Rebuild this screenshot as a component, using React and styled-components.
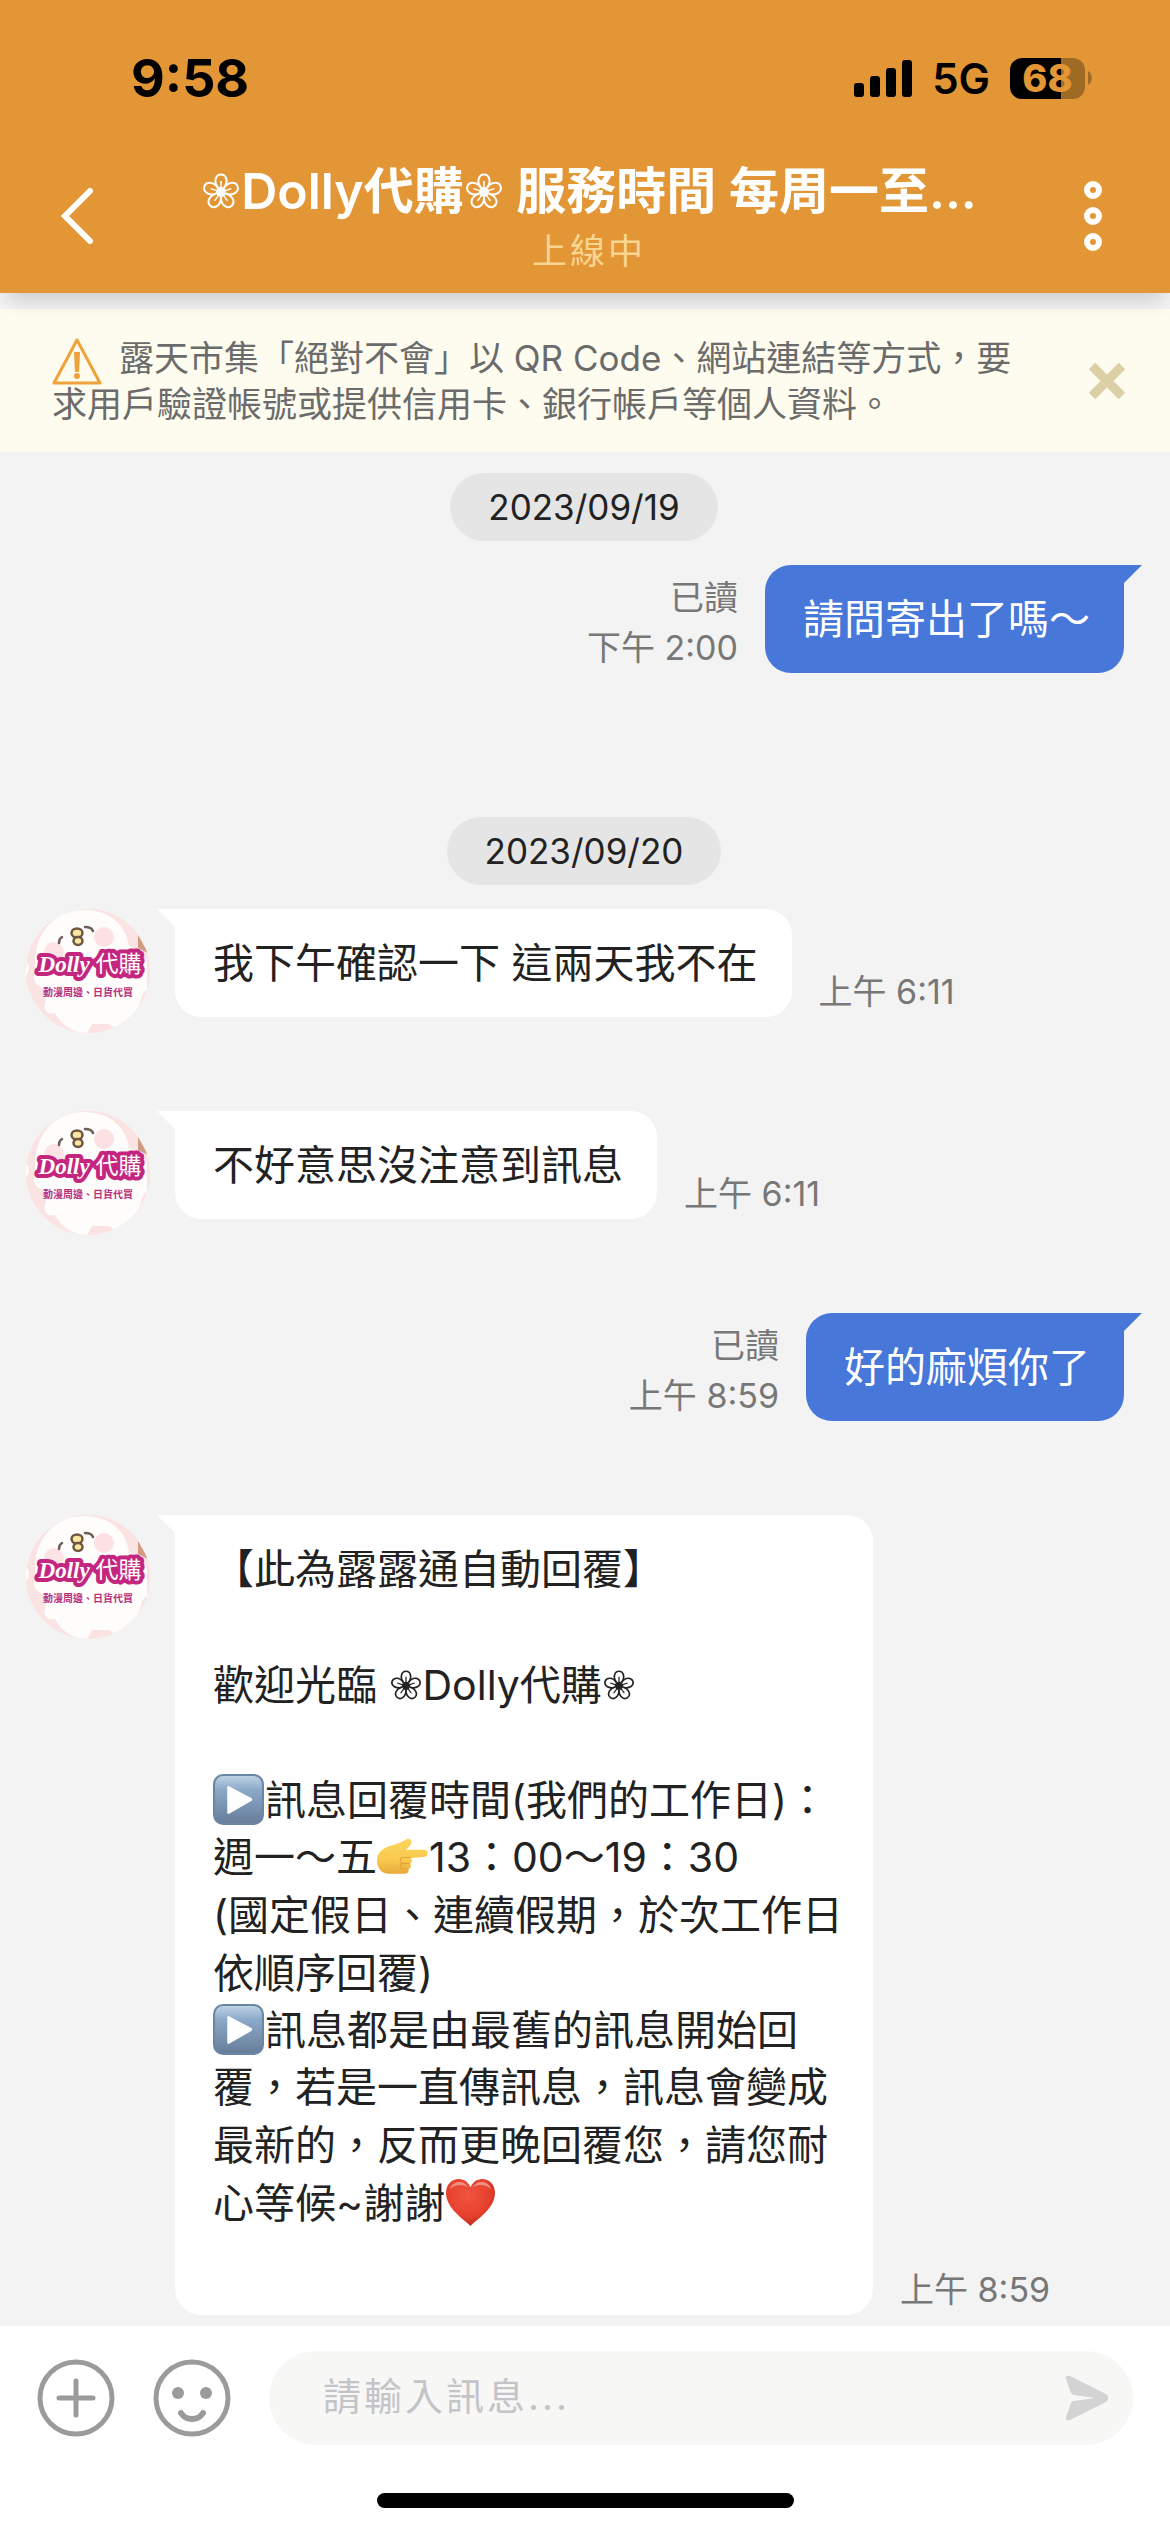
import * as React from "react"
import styled, { createGlobalStyle } from "styled-components"

const contact = {
  name: "{flower}Dolly代購{flower} 服務時間 每周一至...",
  status: "上線中",
}

const days = [
  {
    date: "2023/09/19",
    messages: [
      { id: 1, mine: true, time: "下午 2:00", lines: ["請問寄出了嗎～"] },
    ],
  },
  {
    date: "2023/09/20",
    messages: [
      { id: 2, time: "上午 6:11", lines: ["我下午確認一下 這兩天我不在"] },
      { id: 3, time: "上午 6:11", lines: ["不好意思沒注意到訊息"] },
      { id: 4, mine: true, time: "上午 8:59", lines: ["好的麻煩你了"] },
      {
        id: 5,
        time: "上午 8:59",
        lines: [
          "【此為露露通自動回覆】",
          "",
          "歡迎光臨 {flower}Dolly代購{flower}",
          "",
          "{play}訊息回覆時間(我們的工作日)：",
          "週一～五{point}13：00～19：30",
          "(國定假日、連續假期，於次工作日",
          "依順序回覆)",
          "{play}訊息都是由最舊的訊息開始回",
          "覆，若是一直傳訊息，訊息會變成",
          "最新的，反而更晚回覆您，請您耐",
          "心等候~謝謝{heart}",
          "",
        ],
      },
    ],
  },
]

const petals = [0, 72, 144, 216, 288]

const FlowerEmoji = ({ large }) => (
  <Flower $large={large} viewBox="0 0 36 36" role="img" aria-label="❀">
    {petals.map(angle => (
      <g key={angle} transform={`rotate(${angle} 18 19)`} fill="none" stroke="currentColor">
        <path d="M15 15C10 8 13 1.500 18 1.500S26 8 21 15" strokeWidth="2" />
        <path d="M18 17V8" strokeWidth="1.500" />
      </g>
    ))}
    <circle cx="18" cy="19" r="5" fill="currentColor" />
  </Flower>
)

const PlayEmoji = () => (
  <Emoji viewBox="0 0 50 50" role="img" aria-label="▶️">
    <defs>
      <linearGradient id="play-face" x1="0" y1="0" x2="0" y2="1">
        <stop offset="0" stopColor="#c3d5e6" />
        <stop offset="0.3" stopColor="#8ba9c9" />
        <stop offset="1" stopColor="#667c98" />
      </linearGradient>
    </defs>
    <rect x="1" y="1" width="48" height="48" rx="9" fill="url(#play-face)" stroke="#6b86a2" strokeWidth="2" />
    <path d="M14 13.500c0-1.600 1-2 2.200-1.300l21.300 11.300c1.300.8 1.300 2.200 0 3L16.200 38.800c-1.200.7-2.200.3-2.200-1.300z" fill="#fff" />
  </Emoji>
)

const PointEmoji = () => (
  <Emoji viewBox="0 0 50 50" role="img" aria-label="👉">
    <defs>
      <linearGradient id="hand" x1="0" y1="0" x2="0" y2="1">
        <stop offset="0" stopColor="#fbd55c" />
        <stop offset="0.6" stopColor="#f8c94e" />
        <stop offset="1" stopColor="#e9a93a" />
      </linearGradient>
    </defs>
    <path
      d="M0 29c0-8 6-12 12-14 7-2 12-4 17-7 3-1.500 6 1 4.500 4.500-1 2.500-3.500 4.500-5.500 6h18c5 0 5 6.500 0 7l-13 1c2 2 1.500 4.500-.5 5.500 1.500 2.500.5 4.500-1.500 5 .5 3-1 5-4 5H12C4 42 0 36 0 29z"
      fill="url(#hand)"
    />
    <path d="M33 26h-8c-3 .3-3 5.300 0 5.600h7M31 32h-6c-3 .3-3 4.800 0 5h5" fill="none" stroke="#e3a238" strokeWidth="1" />
  </Emoji>
)

const HeartEmoji = () => (
  <Emoji viewBox="0 0 50 50" role="img" aria-label="❤️">
    <defs>
      <radialGradient id="heart-face" cx="0.45" cy="0.35" r="0.75">
        <stop offset="0" stopColor="#f0553f" />
        <stop offset="0.6" stopColor="#e6402e" />
        <stop offset="1" stopColor="#a82216" />
      </radialGradient>
    </defs>
    <path d="M25 48C18 41 1 31 1 15.500 1 7 7 2 13.500 2 19 2 23 5.500 25 10c2-4.500 6-8 11.500-8C43 2 49 7 49 15.500 49 31 32 41 25 48z" fill="url(#heart-face)" />
    <path d="M5 12c1-5 5-7 9-7s7 2 8 5c-4-3-12-3-17 2zM28 10c1-3 4-5 8-5s8 2 9 7c-5-5-13-5-17-2z" fill="#fff" opacity="0.4" />
  </Emoji>
)

const emojis = { flower: FlowerEmoji, play: PlayEmoji, point: PointEmoji, heart: HeartEmoji }

const RichText = ({ text, large }) =>
  text.split(/\{(\w+)\}/).map((part, i) => {
    if (i % 2 === 0) return part
    const Picture = emojis[part]
    return <Picture key={i} large={large} />
  })

const Avatar = () => (
  <AvatarPicture viewBox="0 0 124 124" role="img" aria-label="Dolly 代購">
    <defs>
      <clipPath id="avatar-clip">
        <circle cx="62" cy="62" r="62" />
      </clipPath>
    </defs>
    <g clipPath="url(#avatar-clip)">
      <rect width="124" height="124" fill="#fae3e2" />
      <path
        d="M9 54C9 22 30 1 58 1c26 0 42 15 45 36 8 2 12 10 18 14v30c-8 4-4 14-12 22-4 6-12 14-20 16l-6-4H66l-5 9c-14 0-26-8-32-20-8 2-12-4-10-10 2-6 0-12-4-16C4 74 9 62 9 54z"
        fill="#fffdfc"
      />
      <path d="M0 52c4 4 4 10 0 14z" fill="#fffdfc" />
      <circle cx="78" cy="28" r="10" fill="#fbe1e1" />
      <circle cx="28" cy="43" r="10" fill="#fbe4e3" />
      <path d="M112 26l10 18-10-5z" fill="#cf9b82" />
      <path d="M33 34c0-3 1-5 3-6M59 18c4 0 7 1 8 4" fill="none" stroke="#6f5d59" strokeWidth="2.500" strokeLinecap="round" />
      <ellipse cx="51" cy="24" rx="5.500" ry="4.500" fill="#f8e7a0" stroke="#6f5640" strokeWidth="2.500" />
      <ellipse cx="52" cy="32" rx="4.500" ry="4" fill="#f8e7a0" stroke="#6f5640" strokeWidth="2.500" />
      <LogoText x="64" y="63" fontSize="23" $outlined>
        Dolly <tspan fontStyle="normal" fontWeight="400">代購</tspan>
      </LogoText>
      <LogoText x="62" y="87" fontSize="10">
        動漫周邊、日貨代買
      </LogoText>
    </g>
  </AvatarPicture>
)

const Message = ({ mine, time, lines }) => (
  <Row $mine={mine}>
    {!mine && <Avatar />}
    <BubbleGroup $mine={mine}>
      <Tail $mine={mine} />
      <Bubble $mine={mine}>
        {lines.map((line, i) => (
          <Line key={i} $compact={line.startsWith("{play}")}>
            <RichText text={line} />
          </Line>
        ))}
      </Bubble>
      <Meta $mine={mine}>
        {mine && <span>已讀</span>}
        <time>{time}</time>
      </Meta>
    </BubbleGroup>
  </Row>
)

const StatusBar = () => (
  <Status>
    <Clock>9:58</Clock>
    <Indicators>
      <svg width="58" height="38" viewBox="0 0 58 38" aria-hidden="true">
        <rect x="0" y="24" width="10" height="14" rx="3" />
        <rect x="16" y="17" width="10" height="21" rx="3" />
        <rect x="32" y="9" width="10" height="29" rx="3" />
        <rect x="48" y="1" width="10" height="37" rx="3" />
      </svg>
      <Network>5G</Network>
      <Battery>
        <Level>68</Level>
        <svg width="4" height="14" viewBox="0 0 4 14" aria-hidden="true">
          <path d="M0 0c5 3 5 11 0 14z" fill="#9f6a24" />
        </svg>
      </Battery>
    </Indicators>
  </Status>
)

const App = () => {
  const [noticeOpen, setNoticeOpen] = React.useState(true)

  return (
    <Page lang="zh-Hant">
      <GlobalStyle />
      <Header>
        <StatusBar />
        <TitleBar>
          <IconButton aria-label="返回">
            <svg width="34" height="56" viewBox="0 0 34 56">
              <path d="M30 3L5 28l25 25" fill="none" stroke="#fff" strokeWidth="6" strokeLinecap="round" />
            </svg>
          </IconButton>
          <Titles>
            <Title>
              <RichText text={contact.name} large />
            </Title>
            <Presence>{contact.status}</Presence>
          </Titles>
          <IconButton aria-label="更多">
            <svg width="18" height="70" viewBox="0 0 18 70" fill="none" stroke="#fff" strokeWidth="6">
              <circle cx="9" cy="9" r="6" />
              <circle cx="9" cy="35" r="6" />
              <circle cx="9" cy="61" r="6" />
            </svg>
          </IconButton>
        </TitleBar>
      </Header>

      {noticeOpen && (
        <Notice>
          <p>
            <Warning viewBox="0 0 50 50" aria-hidden="true">
              <path d="M25 4L48 47H2z" fill="none" stroke="#f0a23a" strokeWidth="3" strokeLinejoin="round" />
              <path d="M22 16h6l-1 20h-4z" fill="#f0a23a" />
              <circle cx="25" cy="40" r="3" fill="#f0a23a" />
            </Warning>
            露天市集「絕對不會」以 QR Code、網站連結等方式，要
            <br />
            求用戶驗證帳號或提供信用卡、銀行帳戶等個人資料。
          </p>
          <IconButton aria-label="關閉" onClick={() => setNoticeOpen(false)}>
            <svg width="38" height="38" viewBox="0 0 38 38">
              <path d="M4 4l30 30M34 4L4 34" stroke="#dbcfa5" strokeWidth="9" />
            </svg>
          </IconButton>
        </Notice>
      )}

      <Chat>
        {days.map(day => (
          <Day key={day.date}>
            <DateLabel>{day.date}</DateLabel>
            {day.messages.map(message => (
              <Message key={message.id} {...message} />
            ))}
          </Day>
        ))}
      </Chat>

      <Footer>
        <Composer onSubmit={e => e.preventDefault()}>
          <IconButton type="button" aria-label="新增">
            <svg width="78" height="78" viewBox="0 0 78 78" fill="none" stroke="#9b9b9b" strokeWidth="5" strokeLinecap="round">
              <circle cx="39" cy="39" r="36" />
              <path d="M39 22v34M22 39h34" />
            </svg>
          </IconButton>
          <IconButton type="button" aria-label="表情">
            <svg width="78" height="78" viewBox="0 0 78 78" fill="none" stroke="#9b9b9b" strokeWidth="5" strokeLinecap="round">
              <circle cx="39" cy="39" r="36" />
              <path d="M28 54c5 8 17 8 22 0" strokeWidth="6" />
              <circle cx="25" cy="34" r="6" fill="#9b9b9b" stroke="none" />
              <circle cx="53" cy="34" r="6" fill="#9b9b9b" stroke="none" />
            </svg>
          </IconButton>
          <Field>
            <input type="text" aria-label="訊息" placeholder="請輸入訊息..." />
            <IconButton aria-label="傳送">
              <svg width="44" height="46" viewBox="0 0 44 46">
                <path d="M1 4C0 1 2 0 5 1l36 18c3 2 3 6 0 8L5 45c-3 1-5 0-4-3l5-14c1-2 1-2 3-2l21-3L9 20c-2 0-2-1-3-2z" fill="#d3d3d3" />
              </svg>
            </IconButton>
          </Field>
        </Composer>
        <HomeIndicator />
      </Footer>
    </Page>
  )
}

const GlobalStyle = createGlobalStyle`
  * {
    box-sizing: border-box;
  }

  body {
    margin: 0;
    background: #f3f3f3;
    font-family: Inter, "Noto Sans CJK TC", "DejaVu Sans", sans-serif;
  }

  p, h1 {
    margin: 0;
  }
`

const Page = styled.div`
  display: flex;
  flex-direction: column;
  min-height: 100vh;
`

const IconButton = styled.button`
  display: flex;
  flex-shrink: 0;
  padding: 0;
  border: 0;
  background: none;
`

const Header = styled.header`
  position: relative;
  background: #e39635;
  box-shadow: 0 14px 20px -8px rgba(0, 0, 0, 0.18);
  padding-bottom: 17px;
`

const Status = styled.div`
  display: flex;
  justify-content: space-between;
  align-items: center;
  height: 156px;
  padding: 0 78px 0 131px;
`

const Clock = styled.time`
  font-size: 52px;
  font-weight: 700;
`

const Indicators = styled.div`
  display: flex;
  align-items: center;
  gap: 20px;
`

const Network = styled.span`
  font-size: 42px;
  font-weight: 600;
`

const Battery = styled.div`
  display: flex;
  align-items: center;
  gap: 3px;
`

const Level = styled.span`
  width: 75px;
  border-radius: 12px;
  background: linear-gradient(90deg, #000 68%, #9f6a24 68%);
  color: #e39635;
  font-size: 38px;
  font-weight: 800;
  line-height: 41px;
  text-align: center;
`

const TitleBar = styled.div`
  display: flex;
  justify-content: space-between;
  align-items: center;
  height: 120px;
  padding: 0 68px 0 60px;
`

const Titles = styled.div`
  display: flex;
  flex-direction: column;
  align-items: center;
  min-width: 0;
`

const Title = styled.h1`
  color: #fff;
  font-size: 50px;
  font-weight: 600;
  line-height: 70px;
  white-space: nowrap;
`

const Presence = styled.span`
  color: #f9d592;
  font-size: 35px;
  letter-spacing: 3px;
  line-height: 50px;
`

const Notice = styled.section`
  display: flex;
  justify-content: space-between;
  align-items: center;
  margin-top: 16px;
  padding: 26px 44px 25px 52px;
  background: #fefbef;
  color: #6b6b6b;
  font-size: 35px;
  line-height: 46px;

  p {
    white-space: nowrap;
  }
`

const Warning = styled.svg`
  width: 50px;
  height: 50px;
  margin: -6px 17px -6px 0;
  vertical-align: middle;
`

const Chat = styled.main`
  flex: 1;
  padding: 0 28px 10px 26px;
  background: #f3f3f3;
`

const Day = styled.section`
  display: flex;
  flex-direction: column;
  padding-top: 21px;

  & + & {
    margin-top: 107px;
  }
`

const DateLabel = styled.time`
  align-self: center;
  margin-bottom: 24px;
  padding: 0 38px;
  border-radius: 34px;
  background: #e5e5e5;
  color: #222;
  font-size: 35px;
  line-height: 68px;
`

const Row = styled.article`
  display: flex;
  justify-content: ${props => (props.$mine ? "flex-end" : "flex-start")};
  align-items: flex-start;
  gap: 7px;
  min-height: 124px;

  & + & {
    margin-top: 78px;
  }
`

const AvatarPicture = styled.svg`
  flex-shrink: 0;
  width: 124px;
  height: 124px;
`

const LogoText = styled.text`
  fill: ${props => (props.$outlined ? "#fff" : "#b5307c")};
  stroke: ${props => (props.$outlined ? "#c4267f" : "none")};
  stroke-width: 8px;
  stroke-linejoin: round;
  paint-order: stroke;
  font-family: "Liberation Serif", "Noto Sans CJK TC", serif;
  font-style: ${props => (props.$outlined ? "italic" : "normal")};
  font-weight: 700;
  text-anchor: middle;
`

const BubbleGroup = styled.div`
  display: flex;
  flex-direction: ${props => (props.$mine ? "row-reverse" : "row")};
  align-items: flex-end;
`

const Tail = styled.i`
  align-self: flex-start;
  width: 18px;
  height: 18px;
  background: ${props => (props.$mine ? "#4777d9" : "#fff")};
  clip-path: ${props => (props.$mine ? "polygon(0 0, 100% 0, 0 100%)" : "polygon(0 0, 100% 0, 100% 100%)")};
`

const Bubble = styled.div`
  max-width: 698px;
  padding: 25px 34px 25px 38px;
  border-radius: ${props => (props.$mine ? "26px 0 26px 26px" : "0 26px 26px 26px")};
  background: ${props => (props.$mine ? "#4777d9" : "#fff")};
  color: ${props => (props.$mine ? "#fff" : "#222")};
  font-size: 41px;
`

const Line = styled.p`
  height: ${props => (props.$compact ? "56px" : "58px")};
  line-height: ${props => (props.$compact ? "56px" : "58px")};
  white-space: pre;
`

const Emoji = styled.svg`
  width: 51px;
  height: 51px;
  margin: -4px 1px 4px 0;
  vertical-align: middle;
`

const Flower = styled.svg`
  width: ${props => (props.$large ? "36px" : "30px")};
  height: ${props => (props.$large ? "36px" : "30px")};
  margin: 0 2px;
  vertical-align: baseline;
`

const Meta = styled.div`
  display: flex;
  flex-direction: column;
  align-items: ${props => (props.$mine ? "flex-end" : "flex-start")};
  padding: 0 27px;
  color: #777;
  font-size: 34px;
  line-height: 50px;
`

const Footer = styled.footer`
  display: flex;
  flex-direction: column;
  align-items: center;
  gap: 48px;
  padding: 25px 0 24px;
  background: #fff;
`

const Composer = styled.form`
  display: flex;
  align-items: center;
  gap: 38px;
  width: 100%;
  padding: 0 37px;
`

const Field = styled.div`
  display: flex;
  flex: 1;
  align-items: center;
  height: 94px;
  padding: 0 24px 0 54px;
  border-radius: 47px;
  background: #f7f7f5;

  input {
    flex: 1;
    min-width: 0;
    padding: 0 0 4px;
    border: 0;
    outline: 0;
    background: none;
    color: #222;
    font-family: inherit;
    font-size: 38px;
    letter-spacing: 3px;
  }

  input::placeholder {
    color: #c4c4c8;
  }
`

const HomeIndicator = styled.div`
  width: 417px;
  height: 15px;
  border-radius: 8px;
  background: #000;
`

export default App
